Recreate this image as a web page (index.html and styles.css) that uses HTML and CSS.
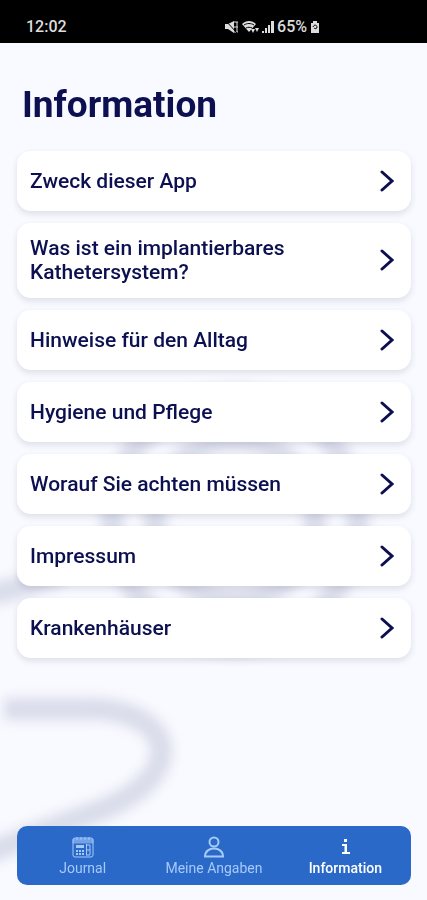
FILE: index.html
```
<!DOCTYPE html>
<html lang="de">
<head>
    <meta charset="UTF-8">
    <meta name="viewport" content="width=device-width, initial-scale=1.0">
    <title>Information</title>
    <link rel="stylesheet" href="styles.css">
</head>
<body>
    <!-- Blurred catheter drawing behind the list -->
    <svg class="backdrop" viewBox="0 0 427 900" preserveAspectRatio="xMidYMax slice" aria-hidden="true">
        <g class="backdrop-lines">
            <circle cx="235" cy="520" r="123"/>
            <circle cx="235" cy="520" r="80"/>
            <path d="M-20 594C0 594 20 588 60 574"/>
            <path d="M4 709H95C138 711 164 730 161 755C157 782 126 802 88 815C45 829 18 842 -20 856"/>
        </g>
    </svg>

    <div class="status-bar">
        <span class="clock">12:02</span>
        <div class="status-icons">
            <svg width="14" height="14" viewBox="0 0 14 14">
                <path class="fill" d="M0 4h3l6-3v12L3 9H0z"/>
                <path class="line" d="M9 2h4M9 12h4M12 2v10M9 7h4"/>
                <path class="slash" d="M1 1l11 12"/>
            </svg>
            <svg width="17" height="14" viewBox="0 0 17 14">
                <path class="fill" d="M0 4C4 0 10 0 14 4L7 12z"/>
                <path class="slash" d="M2 5c3-2 7-2 10 0M4 8c2-1 4-1 6 0"/>
                <path class="fill" d="M9 9h4l-2 4zM13 8h4l-2 4z"/>
            </svg>
            <svg width="12" height="14" viewBox="0 0 12 14">
                <path class="fill" d="M0 11h2v2H0zM3 8h2v5H3zM6 5h2v8H6zM9 1h3v12H9z"/>
            </svg>
            <span class="battery-level">65%</span>
            <svg width="10" height="14" viewBox="0 0 10 14">
                <path class="fill" d="M3 1h4v2h2v10H1V3h2z"/>
                <path class="slash" d="M3 7c1-3 4-2 4 0s-2 2-3 1"/>
            </svg>
        </div>
    </div>

    <main class="content">
        <h1>Information</h1>
        <div class="topic-list">
            <button class="topic">
                <span>Zweck dieser App</span>
                <svg class="chevron" viewBox="0 0 14 22"><path d="M2 2l10 9L2 20"/></svg>
            </button>
            <button class="topic">
                <span>Was ist ein implantierbares Kathetersystem?</span>
                <svg class="chevron" viewBox="0 0 14 22"><path d="M2 2l10 9L2 20"/></svg>
            </button>
            <button class="topic">
                <span>Hinweise für den Alltag</span>
                <svg class="chevron" viewBox="0 0 14 22"><path d="M2 2l10 9L2 20"/></svg>
            </button>
            <button class="topic">
                <span>Hygiene und Pflege</span>
                <svg class="chevron" viewBox="0 0 14 22"><path d="M2 2l10 9L2 20"/></svg>
            </button>
            <button class="topic">
                <span>Worauf Sie achten müssen</span>
                <svg class="chevron" viewBox="0 0 14 22"><path d="M2 2l10 9L2 20"/></svg>
            </button>
            <button class="topic">
                <span>Impressum</span>
                <svg class="chevron" viewBox="0 0 14 22"><path d="M2 2l10 9L2 20"/></svg>
            </button>
            <button class="topic">
                <span>Krankenhäuser</span>
                <svg class="chevron" viewBox="0 0 14 22"><path d="M2 2l10 9L2 20"/></svg>
            </button>
        </div>
    </main>

    <nav class="tab-bar">
        <a class="tab" href="#journal">
            <svg width="22" height="22" viewBox="0 0 22 22">
                <rect x="1" y="2" width="20" height="19" rx="2"/>
                <path class="tint" d="M1 3h20v4H1z"/>
                <path d="M5 1v3M9 1v3M13 1v3M17 1v3"/>
                <path class="solid" d="M4 9h8v3H4zM4 14h2v2H4zM7 14h2v2H7zM10 14h2v2h-2zM4 17h2v2H4zM7 17h2v2H7zM10 17h2v2h-2z"/>
                <path d="M14.500 8v11M14 9h4v10h-4M14 14h4"/>
            </svg>
            <span>Journal</span>
        </a>
        <a class="tab" href="#angaben">
            <svg class="person" width="22" height="22" viewBox="0 0 22 22">
                <circle cx="11" cy="6" r="4.500"/>
                <path d="M2 20.500c0-5 4-8 9-8s9 3 9 8z"/>
            </svg>
            <span>Meine Angaben</span>
        </a>
        <a class="tab active" href="#information">
            <svg width="22" height="22" viewBox="0 0 22 22">
                <rect class="solid" x="10" y="3" width="3" height="3"/>
                <path class="solid" d="M8 8h5v8h3v2H8v-2h2.500v-6H8z"/>
            </svg>
            <span>Information</span>
        </a>
    </nav>
</body>
</html>
```
FILE: styles.css
```
* {
    box-sizing: border-box;
}
body {
    font-family: Roboto, sans-serif;
    margin: 0;
    min-height: 100vh;
    display: flex;
    flex-direction: column;
    background-color: #f9faff;
    color: #0c1050;
}
.backdrop {
    position: fixed;
    inset: 0;
    width: 100%;
    height: 100%;
    z-index: -1;
}
.backdrop-lines {
    fill: none;
    stroke: #d9dcea;
    stroke-width: 22px;
    filter: blur(6px);
}
.status-bar {
    display: flex;
    align-items: center;
    height: 43px;
    padding: 10px 107px 0 26px;
    justify-content: space-between;
    background-color: #000;
    color: #ddd;
    font-size: 16px;
    font-weight: 500;
}
.status-icons {
    display: flex;
    align-items: center;
    gap: 3px;
}
.status-icons .fill {
    fill: #ddd;
}
.status-icons .line {
    fill: none;
    stroke: #ddd;
}
.status-icons .slash {
    fill: none;
    stroke: #000;
}
.content {
    flex: 1;
    padding: 40px 16px 24px 17px;
}
h1 {
    margin: 0 5px 24px;
    font-size: 37px;
    line-height: 44px;
    font-weight: 700;
}
.topic-list {
    display: flex;
    flex-direction: column;
    gap: 12px;
}
.topic {
    display: flex;
    align-items: center;
    justify-content: space-between;
    gap: 70px;
    min-height: 60px;
    padding: 13px 17px 14px 13px;
    border: none;
    border-radius: 14px;
    background-color: #fff;
    box-shadow: 0 3px 6px rgba(40, 40, 80, 0.13);
    color: inherit;
    font-family: inherit;
    font-size: 21px;
    line-height: 24px;
    font-weight: 500;
    text-align: left;
    cursor: pointer;
}
.chevron {
    width: 14px;
    height: 22px;
    flex-shrink: 0;
    fill: none;
    stroke: #0c1050;
    stroke-width: 3px;
    stroke-linecap: round;
}
.tab-bar {
    display: grid;
    grid-template-columns: 1fr 1fr 1fr;
    margin: 0 16px 15px 17px;
    padding: 10px 0 7px;
    border-radius: 10px;
    background-color: #2b69c8;
}
.tab {
    display: flex;
    flex-direction: column;
    align-items: center;
    color: #a5c9fa;
    font-size: 14px;
    line-height: 20px;
    text-decoration: none;
}
.tab svg {
    fill: none;
    stroke: currentColor;
}
.tab .person {
    stroke-width: 2px;
}
.tab .tint {
    fill: currentColor;
    opacity: 0.6;
}
.tab .solid {
    fill: currentColor;
    stroke: none;
}
.tab.active {
    color: #fff;
    font-weight: 500;
}
```
